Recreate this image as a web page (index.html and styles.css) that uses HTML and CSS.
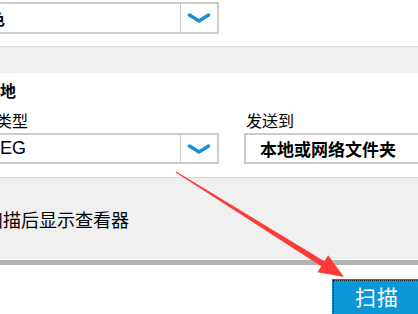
FILE: index.html
```html
<!DOCTYPE html>
<html lang="zh-CN">
<head>
<meta charset="utf-8">
<title>扫描</title>
<link rel="stylesheet" href="styles.css">
</head>
<body>
<div class="page">
  <div class="combo combo-top">
    <span class="val val-top">彩色</span>
    <span class="arrow-btn"><svg width="24" height="10" viewBox="0 0 24 10"><path d="M2.5 2 L12 8 L21.5 2" fill="none" stroke="#1b8ed8" stroke-width="3.4" stroke-linecap="round" stroke-linejoin="round"/></svg></span>
  </div>
  <div class="band"></div>
  <div class="heading">本地</div>
  <div class="fields">
    <div class="field field-type">
      <div class="label">文件类型</div>
      <div class="combo">
        <span class="val val-type">JPEG</span>
        <span class="arrow-btn"><svg width="24" height="10" viewBox="0 0 24 10"><path d="M2.5 2 L12 8 L21.5 2" fill="none" stroke="#1b8ed8" stroke-width="3.4" stroke-linecap="round" stroke-linejoin="round"/></svg></span>
      </div>
    </div>
    <div class="field field-send">
      <div class="label label-send">发送到</div>
      <div class="box">本地或网络文件夹</div>
    </div>
  </div>
  <div class="options">
    <label class="check"><span class="cb"></span><span>扫描后显示查看器</span></label>
  </div>
  <div class="sep"></div>
  <div class="footer">
    <button class="scan">扫描</button>
  </div>
  <svg class="annot" width="418" height="314" viewBox="0 0 418 314">
    <polygon points="175.7,172.4 176.3,171.6 324.4,261.2 328.1,255.3 344,277 317.5,272.2 321.2,266.3" fill="#ff3a3a"/>
  </svg>
</div>
</body>
</html>
```

FILE: styles.css
```css
html, body {
  margin: 0;
  padding: 0;
  background: #ffffff;
}
body {
  width: 418px;
  height: 314px;
  overflow: hidden;
  font-family: "Noto Sans CJK SC", "Liberation Sans", sans-serif;
  color: #000;
}
.page {
  position: relative;
  width: 418px;
  height: 314px;
  overflow: hidden;
}
.combo {
  display: flex;
  align-items: stretch;
  box-sizing: border-box;
  height: 31px;
  border: 2px solid #cbcbcb;
  background: #fff;
}
.combo-top {
  margin-top: 2px;
  margin-left: -60px;
  width: 279px;
  height: 32px;
}
.val {
  flex: 1;
  display: flex;
  align-items: center;
  white-space: nowrap;
}
.val-top {
  padding-left: 31px;
  font-size: 16px;
  font-weight: bold;
}
.arrow-btn {
  width: 36px;
  border-left: 1px solid #cbcbcb;
  display: flex;
  align-items: center;
  justify-content: center;
}
.band {
  margin-top: 12px;
  height: 26px;
  border-top: 1px solid #dcdcdc;
  background: #f0f0f0;
}
.heading {
  margin-top: 7px;
  margin-left: -16px;
  font-size: 16px;
  line-height: 20px;
  font-weight: bold;
  white-space: nowrap;
}
.fields {
  display: flex;
  gap: 25px;
  margin-top: 10px;
}
.field {
  display: flex;
  flex-direction: column;
  gap: 3px;
  flex: none;
}
.field-type {
  margin-left: -40px;
  width: 259px;
}
.label {
  font-size: 16px;
  line-height: 20px;
  padding-left: 4px;
  white-space: nowrap;
}
.label-send {
  padding-left: 2px;
}
.val-type {
  padding-left: 17px;
  font-family: "Liberation Sans", sans-serif;
  font-size: 18px;
}
.field-send {
  width: 200px;
}
.box {
  box-sizing: border-box;
  height: 31px;
  border: 2px solid #cbcbcb;
  padding-left: 14px;
  display: flex;
  align-items: center;
  font-size: 17px;
  font-weight: bold;
  white-space: nowrap;
}
.options {
  margin-top: 13px;
  box-sizing: border-box;
  height: 82px;
  border-top: 1px solid #dcdcdc;
  background: #f0f0f0;
  padding-top: 29px;
}
.check {
  display: flex;
  align-items: center;
  gap: 9px;
  margin-left: -40px;
  font-size: 18px;
  line-height: 24px;
  white-space: nowrap;
}
.cb {
  width: 14px;
  height: 14px;
  border: 1px solid #333;
  background: #fff;
}
.sep {
  height: 5px;
  border-top: 1px solid #ffffff;
  background: #b4b4b4;
}
.footer {
  display: flex;
  padding-top: 14px;
  padding-left: 332px;
}
.scan {
  flex: none;
  width: 100px;
  height: 40px;
  margin: 0;
  box-sizing: border-box;
  border: 1px solid #0a80c0;
  outline: 1px dotted #222;
  outline-offset: -2px;
  background: #0b96d7;
  color: #fff;
  font-family: "Noto Sans CJK SC", sans-serif;
  font-size: 21px;
  letter-spacing: 1px;
  text-align: left;
  padding: 0 0 6px 22px;
  line-height: 28px;
}
.annot {
  position: absolute;
  left: 0;
  top: 0;
  pointer-events: none;
}
```
